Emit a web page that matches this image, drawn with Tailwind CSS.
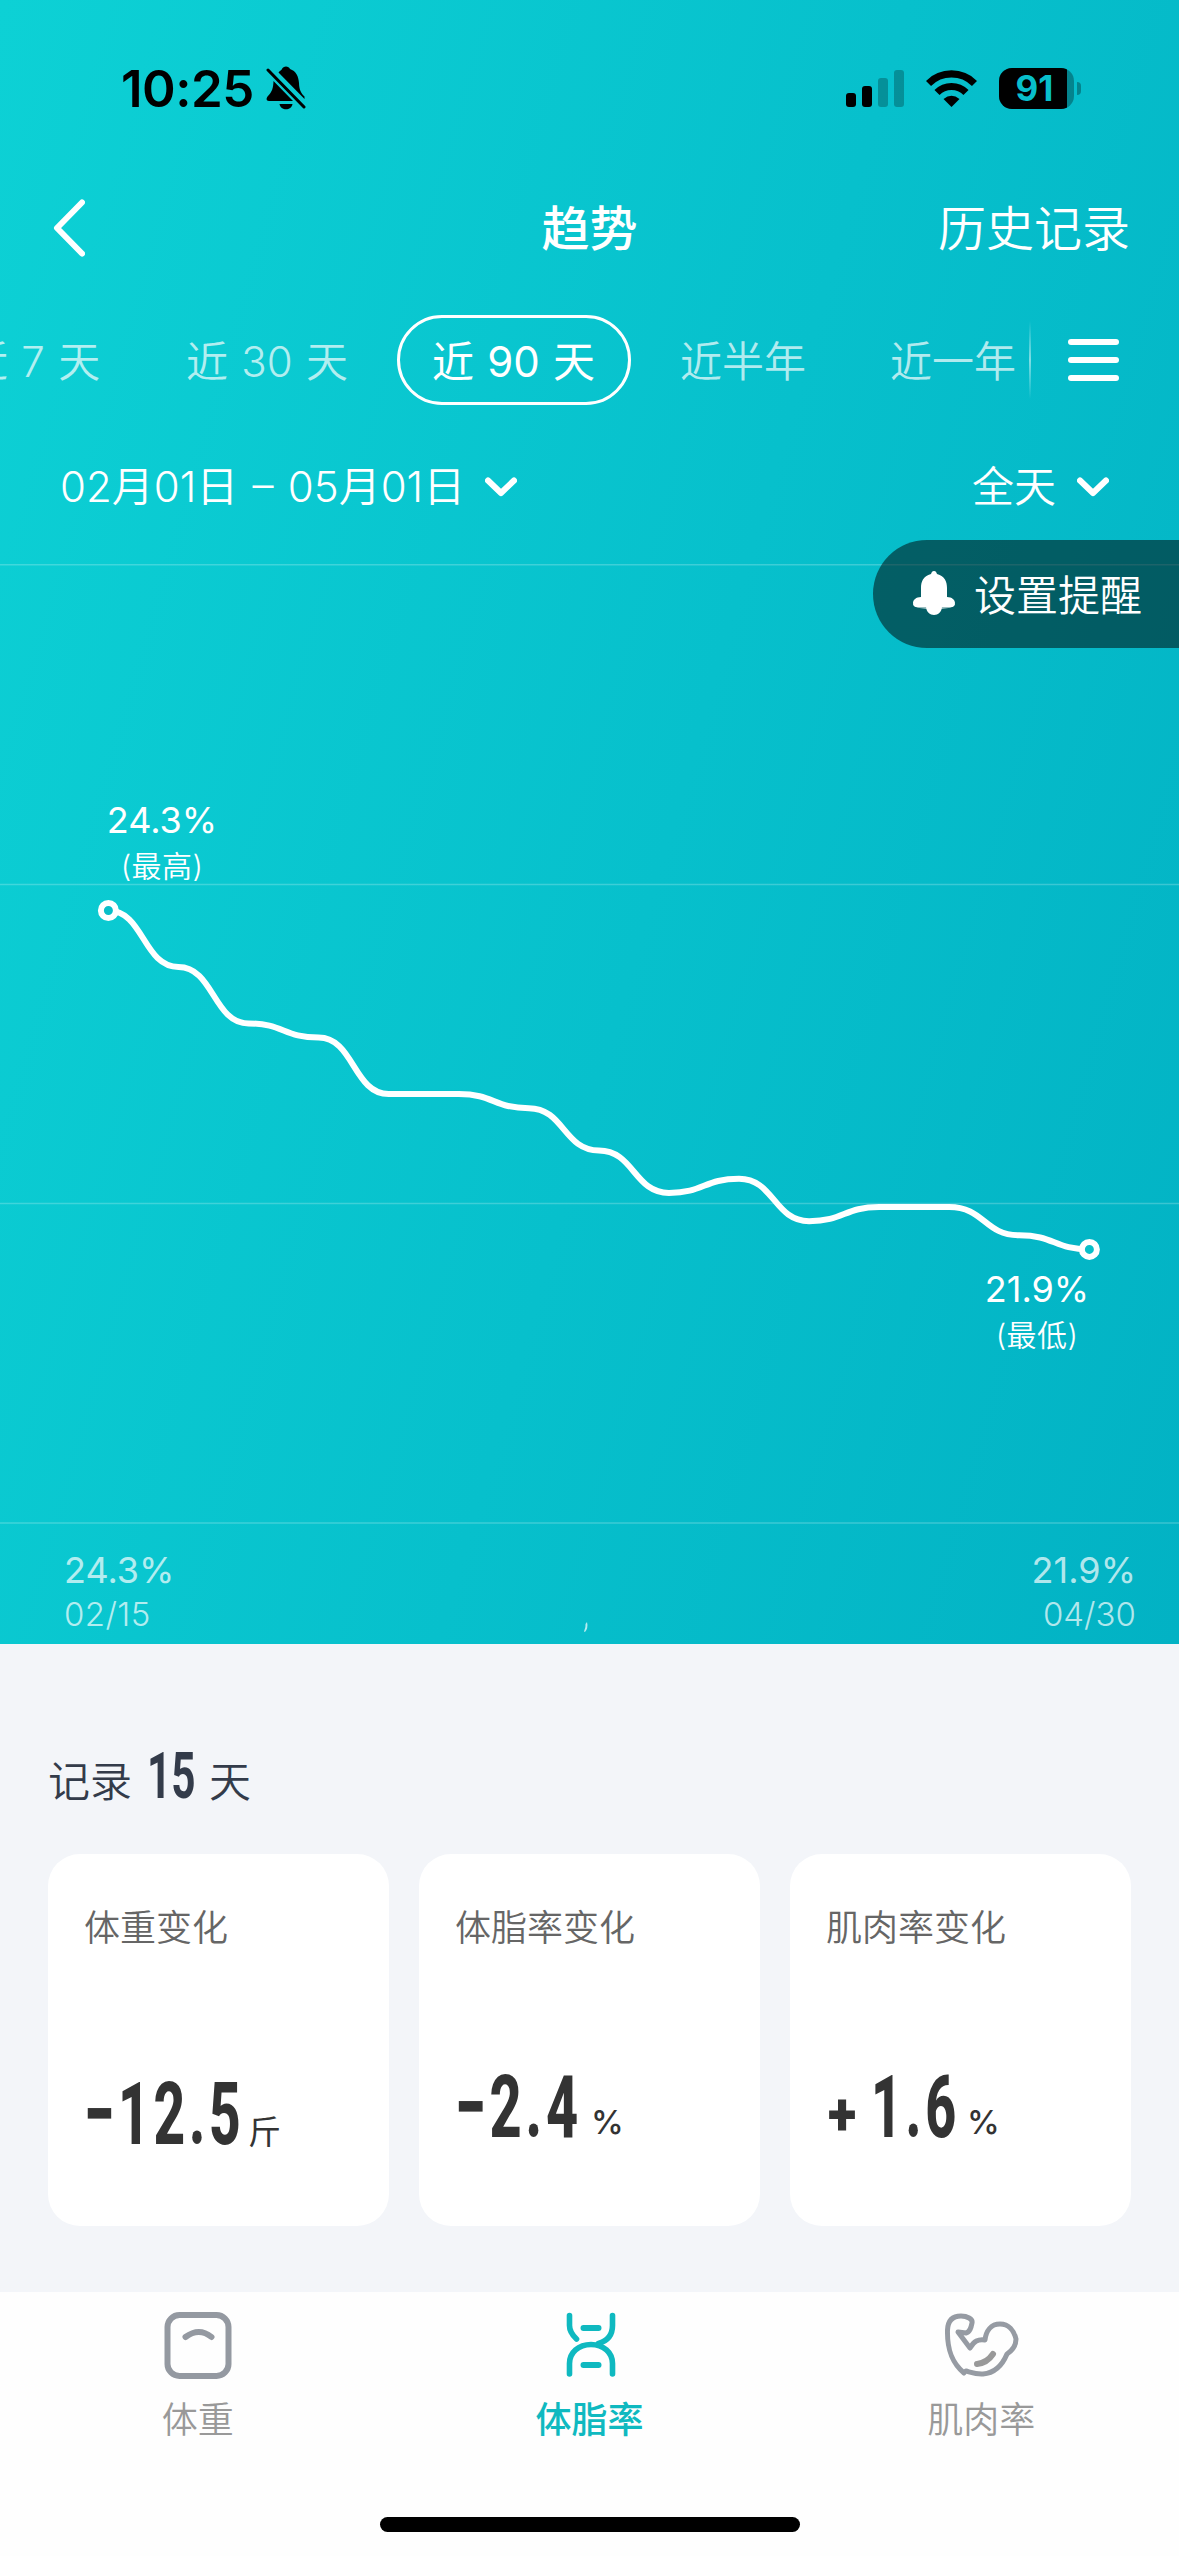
<!DOCTYPE html>
<html lang="zh-CN">
<head>
    <meta charset="UTF-8">
    <meta name="viewport" content="width=device-width, initial-scale=1.0">
    <title>趋势</title>
    <script src="https://cdn.jsdelivr.net/npm/@tailwindcss/browser@4"></script>
</head>
<body class="w-[1179px] h-[2556px] overflow-hidden bg-[#f3f5f9] font-['Inter','Noto_Sans_CJK_SC',sans-serif]">
    <div class="flex flex-col h-[2556px]">

        <!-- Trend header -->
        <section class="relative flex flex-col h-[1644px] shrink-0 text-white bg-linear-[106deg,#0dd1d5,#07c0cc_55%,#02b2c4]">

            <!-- Status bar -->
            <div class="flex items-center justify-between h-[176px] pl-[121px] pr-[98px] text-black">
                <div class="flex items-center gap-[12px]">
                    <span class="text-[51px] leading-none font-semibold tracking-[-0.5px]">10:25</span>
                    <svg class="w-[40px] h-[44px]" viewBox="0 0 40 44" fill="currentColor">
                        <path d="M12.500 6.500C14 4.500 15.500 4 16 3C17 -.5 23 -.5 24 3C30 5 32.500 10 33 17C33.200 24 35 27 38.500 30.500V33Z" />
                        <path d="M7.500 15L27 35H3C0 35 0 32 2 30C6 26 7.300 22 7.500 15Z" />
                        <path d="M13.500 38H26.500C25.500 45 14.500 45 13.500 38Z" />
                        <path d="M2 4L38 41" stroke="currentColor" stroke-width="3" stroke-linecap="round" />
                    </svg>
                </div>
                <div class="flex items-center">
                    <svg class="w-[58px] h-[37px]" viewBox="0 0 58 37" fill="currentColor">
                        <rect x="0" y="23" width="10" height="14" rx="3" />
                        <rect x="16" y="16" width="10" height="21" rx="3" />
                        <rect x="32" y="8" width="10" height="29" rx="3" opacity=".25" />
                        <rect x="48" y="0" width="10" height="37" rx="3" opacity=".25" />
                    </svg>
                    <svg class="ml-[22px] w-[51px] h-[37px]" viewBox="0 0 51 37" fill="none" stroke="currentColor" stroke-width="7.200">
                        <path d="M2.500 13.500A32.500 32.500 0 0 1 48.500 13.500" />
                        <path d="M11 22.500A20.500 20.500 0 0 1 40 22.500" />
                        <path d="M25.500 37L17.500 29Q25.500 22.500 33.500 29Z" fill="currentColor" stroke="none" />
                    </svg>
                    <div class="ml-[22px] flex items-center gap-[3px]">
                        <div class="flex w-[75px] h-[41px] rounded-[13px] overflow-hidden bg-black/30">
                            <div class="w-[68px] bg-black text-center text-[35px] leading-[41px] font-bold text-[#08bfcb] pl-[3px]">91</div>
                        </div>
                        <div class="w-[4px] h-[13px] rounded-r-full bg-black/30"></div>
                    </div>
                </div>
            </div>

            <!-- Nav bar -->
            <div class="grid grid-cols-3 items-center h-[104px] pl-[53px] pr-[49px] text-[48px] leading-none">
                <svg class="w-[32px] h-[58px]" viewBox="0 0 32 58" fill="none" stroke="currentColor" stroke-width="6" stroke-linecap="round" stroke-linejoin="round">
                    <path d="M29 3.500L4 29L29 54.500" />
                </svg>
                <h1 class="pt-[2px] text-center font-medium -ml-1">趋势</h1>
                <a class="pt-[2px] text-right font-[350]">历史记录</a>
            </div>

            <!-- Range tabs -->
            <div class="mt-[35px] flex items-center h-[90px] text-[42px] leading-none font-[350] text-white/70 whitespace-nowrap">
                <div class="flex items-center w-[1029px] h-full overflow-hidden [word-spacing:1.5px]">
                    <span class="-ml-[34px] w-[220px] pt-[4px]">近 7 天</span>
                    <span class="w-[211px] pt-[4px]">近 30 天</span>
                    <span class="flex items-center justify-center w-[234px] h-[90px] pt-[4px] pr-[1px] rounded-full border-3 border-white font-normal text-white">近 90 天</span>
                    <span class="ml-[49px] w-[210px] pt-[4px]">近半年</span>
                    <span class="pt-[4px]">近一年</span>
                </div>
                <div class="w-[2px] h-[78px] bg-linear-to-b from-white/0 via-white/50 to-white/0"></div>
                <div class="ml-[37px] flex flex-col gap-[12px]">
                    <div class="w-[51px] h-[6px] rounded-full bg-white"></div>
                    <div class="w-[51px] h-[6px] rounded-full bg-white"></div>
                    <div class="w-[51px] h-[6px] rounded-full bg-white"></div>
                </div>
            </div>

            <!-- Filters -->
            <div class="flex items-center justify-between h-[159px] pt-[4px] pl-[60px] pr-[70px] text-[42px] leading-none font-[350]">
                <div class="flex items-center gap-[20px]">
                    <span class="pt-[1px] [word-spacing:2.5px]">02月01日 – 05月01日</span>
                    <svg class="w-[32px] h-[20px]" viewBox="0 0 32 20" fill="none" stroke="currentColor" stroke-width="6" stroke-linecap="round" stroke-linejoin="round">
                        <path d="M3 3.500L16 16L29 3.500" />
                    </svg>
                </div>
                <div class="flex items-center gap-[21px]">
                    <span class="pt-[1px]">全天</span>
                    <svg class="w-[32px] h-[20px]" viewBox="0 0 32 20" fill="none" stroke="currentColor" stroke-width="6" stroke-linecap="round" stroke-linejoin="round">
                        <path d="M3 3.500L16 16L29 3.500" />
                    </svg>
                </div>
            </div>

            <!-- Chart -->
            <div class="relative h-[960px]">
                <svg class="w-full h-full" viewBox="0 0 1179 960" fill="none">
                    <g stroke="#fff" stroke-opacity=".22" stroke-width="1.500">
                        <path d="M0 .75H1179M0 320.500H1179M0 639.500H1179M0 959H1179" />
                    </g>
                    <path id="line" stroke="#fff" stroke-width="6" />
                    <g id="dots" stroke="#fff" stroke-width="6"></g>
                </svg>
                <div class="absolute left-[108px] top-[238px] w-[108px] flex flex-col items-center whitespace-nowrap">
                    <span class="text-[36px] leading-[36px]">24.3%</span>
                    <span class="mt-[13px] text-[30px] leading-[30px] font-[350] tracking-[0.4px]">(最高)</span>
                </div>
                <div class="absolute left-[983px] top-[707px] w-[108px] flex flex-col items-center whitespace-nowrap">
                    <span class="text-[36px] leading-[36px]">21.9%</span>
                    <span class="mt-[13px] text-[30px] leading-[30px] font-[350] tracking-[0.4px]">(最低)</span>
                </div>
            </div>

            <!-- Axis labels -->
            <div class="flex justify-between h-[120px] pt-[28px] pl-[64px] pr-[43px] text-white/70">
                <div class="flex flex-col gap-[10px]">
                    <span class="text-[36px] leading-[36px]">24.3%</span>
                    <span class="text-[33px] leading-[33px] font-light tracking-[0.4px]">02/15</span>
                </div>
                <svg class="mt-[70px] -ml-[34px] w-[6px] h-[10px]" viewBox="0 0 6 10" fill="currentColor">
                    <path d="M4 0Q5.500 6 2 10L1 9.500Q3 5 2.500 2Z" />
                </svg>
                <div class="flex flex-col gap-[10px] text-right">
                    <span class="text-[36px] leading-[36px]">21.9%</span>
                    <span class="text-[33px] leading-[33px] font-light">04/30</span>
                </div>
            </div>

            <!-- Floating reminder -->
            <div class="absolute right-0 top-[540px] flex items-center w-[306px] h-[108px] rounded-l-full bg-black/50 pl-[39px] text-[42px] leading-none font-[350] whitespace-nowrap">
                <svg class="w-[44px] h-[44px] -mt-[2px]" viewBox="0 0 44 44" fill="#fff">
                    <path d="M1 33C1 40 43 40 43 33Z" opacity=".6" />
                    <path d="M22 0C24 0 24.500 1.500 25 3C33 5 35 11 35 17V26C40 26 43 29 43 32C43 36 40 37 36 36H8C4 37 1 36 1 32C1 29 4 26 9 26V17C9 11 11 5 19 3C19.500 1.500 20 0 22 0Z" />
                    <path d="M14 35H30C30 47 14 47 14 35Z" />
                </svg>
                <span class="ml-[18px] pt-[4px]">设置提醒</span>
            </div>
        </section>

        <!-- Summary -->
        <section class="h-[648px] shrink-0 px-[48px]">
            <div class="flex items-baseline h-[210px] pt-[96px] text-[42px] leading-[70px] font-[350] text-[#333b4a]">
                <span>记录</span>
                <span class="relative top-[1px] ml-[15px] w-[47px] font-[Roboto] text-[65px] font-bold"><span class="inline-block origin-left scale-x-[0.65]">15</span></span>
                <span class="ml-[15px]">天</span>
            </div>
            <div class="grid grid-cols-3 gap-[30px] text-[#333]">
                <div class="h-[372px] rounded-[32px] bg-white px-[36px] pt-[54px]">
                    <div class="text-[36px] leading-[40px] font-[350] text-[#666]">体重变化</div>
                    <div class="mt-[116px] flex items-baseline leading-[100px]">
                        <span class="w-[160px] font-[Roboto] text-[88px] font-extrabold tracking-[6px] whitespace-nowrap"><span class="inline-block origin-left scale-x-[0.625]">−12.5</span></span>
                        <span class="ml-[4px] text-[33px] font-normal">斤</span>
                    </div>
                </div>
                <div class="h-[372px] rounded-[32px] bg-white px-[36px] pt-[54px]">
                    <div class="text-[36px] leading-[40px] font-[350] text-[#666]">体脂率变化</div>
                    <div class="mt-[109px] flex items-baseline leading-[100px]">
                        <span class="w-[126px] font-[Roboto] text-[88px] font-extrabold tracking-[6px] whitespace-nowrap"><span class="inline-block origin-left scale-x-[0.635]">−2.4</span></span>
                        <span class="relative -top-[3px] ml-[10px] text-[33px] font-medium">%</span>
                    </div>
                </div>
                <div class="h-[372px] rounded-[32px] bg-white px-[36px] pt-[54px]">
                    <div class="text-[36px] leading-[40px] font-[350] text-[#666]">肌肉率变化</div>
                    <div class="mt-[109px] flex items-baseline leading-[100px]">
                        <span class="relative left-[2px] -top-[2px] w-[45px] font-[Roboto] text-[60px] font-black"><span class="inline-block origin-left scale-x-[0.88]">+</span></span>
                        <span class="w-[86px] font-[Roboto] text-[88px] font-extrabold tracking-[6px] whitespace-nowrap"><span class="inline-block origin-left scale-x-[0.61]">1.6</span></span>
                        <span class="relative -top-[3px] ml-[10px] text-[33px] font-medium">%</span>
                    </div>
                </div>
            </div>
        </section>

        <!-- Tab bar -->
        <nav class="flex flex-col items-center h-[264px] bg-[#fefefe]">
            <div class="grid grid-cols-3 w-full h-[225px] px-[2px] pt-[17px] text-[36px] leading-[40px] font-[350] text-[#999]">
                <div class="flex flex-col items-center gap-[21px]">
                    <svg class="w-[72px] h-[70px]" viewBox="0 0 72 70" fill="none" stroke="#9499a1" stroke-width="6" stroke-linecap="round">
                        <rect x="5.500" y="6" width="61" height="61" rx="12" />
                        <path d="M23.500 28Q37 18 49.500 28" />
                    </svg>
                    <span>体重</span>
                </div>
                <div class="flex flex-col items-center gap-[21px] font-medium text-[#0fb9c0]">
                    <svg class="w-[72px] h-[70px]" viewBox="-1 0 72 70" fill="none" stroke="currentColor" stroke-width="5.600" stroke-linecap="round">
                        <path d="M15.500 6.500V16.500Q15.500 23.500 22.500 30" />
                        <path d="M58.500 6.500V16.500C58.500 27.500 51.500 32.500 44.500 34.500" />
                        <path d="M15.500 65V54.500C15.500 43.500 24.500 35.500 37 35.500C49.500 35.500 58.500 43.500 58.500 54.500V65" />
                        <path d="M29.500 19H44.500M29.500 56H44.500" stroke-width="6" />
                    </svg>
                    <span>体脂率</span>
                </div>
                <div class="flex flex-col items-center gap-[21px]">
                    <svg class="w-[84px] h-[70px]" viewBox="-1 -1 84 70" fill="none" stroke="#969ba3" stroke-width="5" stroke-linecap="round" stroke-linejoin="round">
                        <path d="M24 63C12 53 7 40 7.500 20C8 8 15 6 21 6C27 6 33 9 32 13C31 18 30 22 26 23L18 22L30 38C34 31 38 29 45 30C46 21 51 14 60 14C69 14 74 21 76 29C76 35 73 40 67 44C62 56 55 63 43 64C36 64.500 30 62 26 61" />
                        <path d="M37 54Q47 53 53 44" stroke="#999" stroke-width="6" />
                    </svg>
                    <span>肌肉率</span>
                </div>
            </div>
            <div class="w-[420px] h-[15px] rounded-full bg-black"></div>
        </nav>
    </div>

    <script>
        // body fat readings, oldest first
        const values = [24.3, 23.9, 23.5, 23.4, 23.0, 23.0, 22.9, 22.6, 22.3, 22.4, 22.1, 22.2, 22.2, 22.0, 21.9];
        const startX = 108.4;
        const stepX = 70.07;
        const points = values.map((v, i) => [startX + i * stepX, 346.5 + (24.3 - v) * 141.2]);

        let d = `M${points[0][0]} ${points[0][1]}`;
        for (let i = 1; i < points.length; i++) {
            const mid = (points[i - 1][0] + points[i][0]) / 2;
            d += `C${mid} ${points[i - 1][1]} ${mid} ${points[i][1]} ${points[i][0]} ${points[i][1]}`;
        }
        document.getElementById('line').setAttribute('d', d);

        // only the highest and the lowest reading get a marker
        document.getElementById('dots').innerHTML = [points[0], points[points.length - 1]]
            .map(p => `<circle cx="${p[0]}" cy="${p[1]}" r="7.500" fill="#08bfc9" />`)
            .join('');
    </script>
</body>
</html>
